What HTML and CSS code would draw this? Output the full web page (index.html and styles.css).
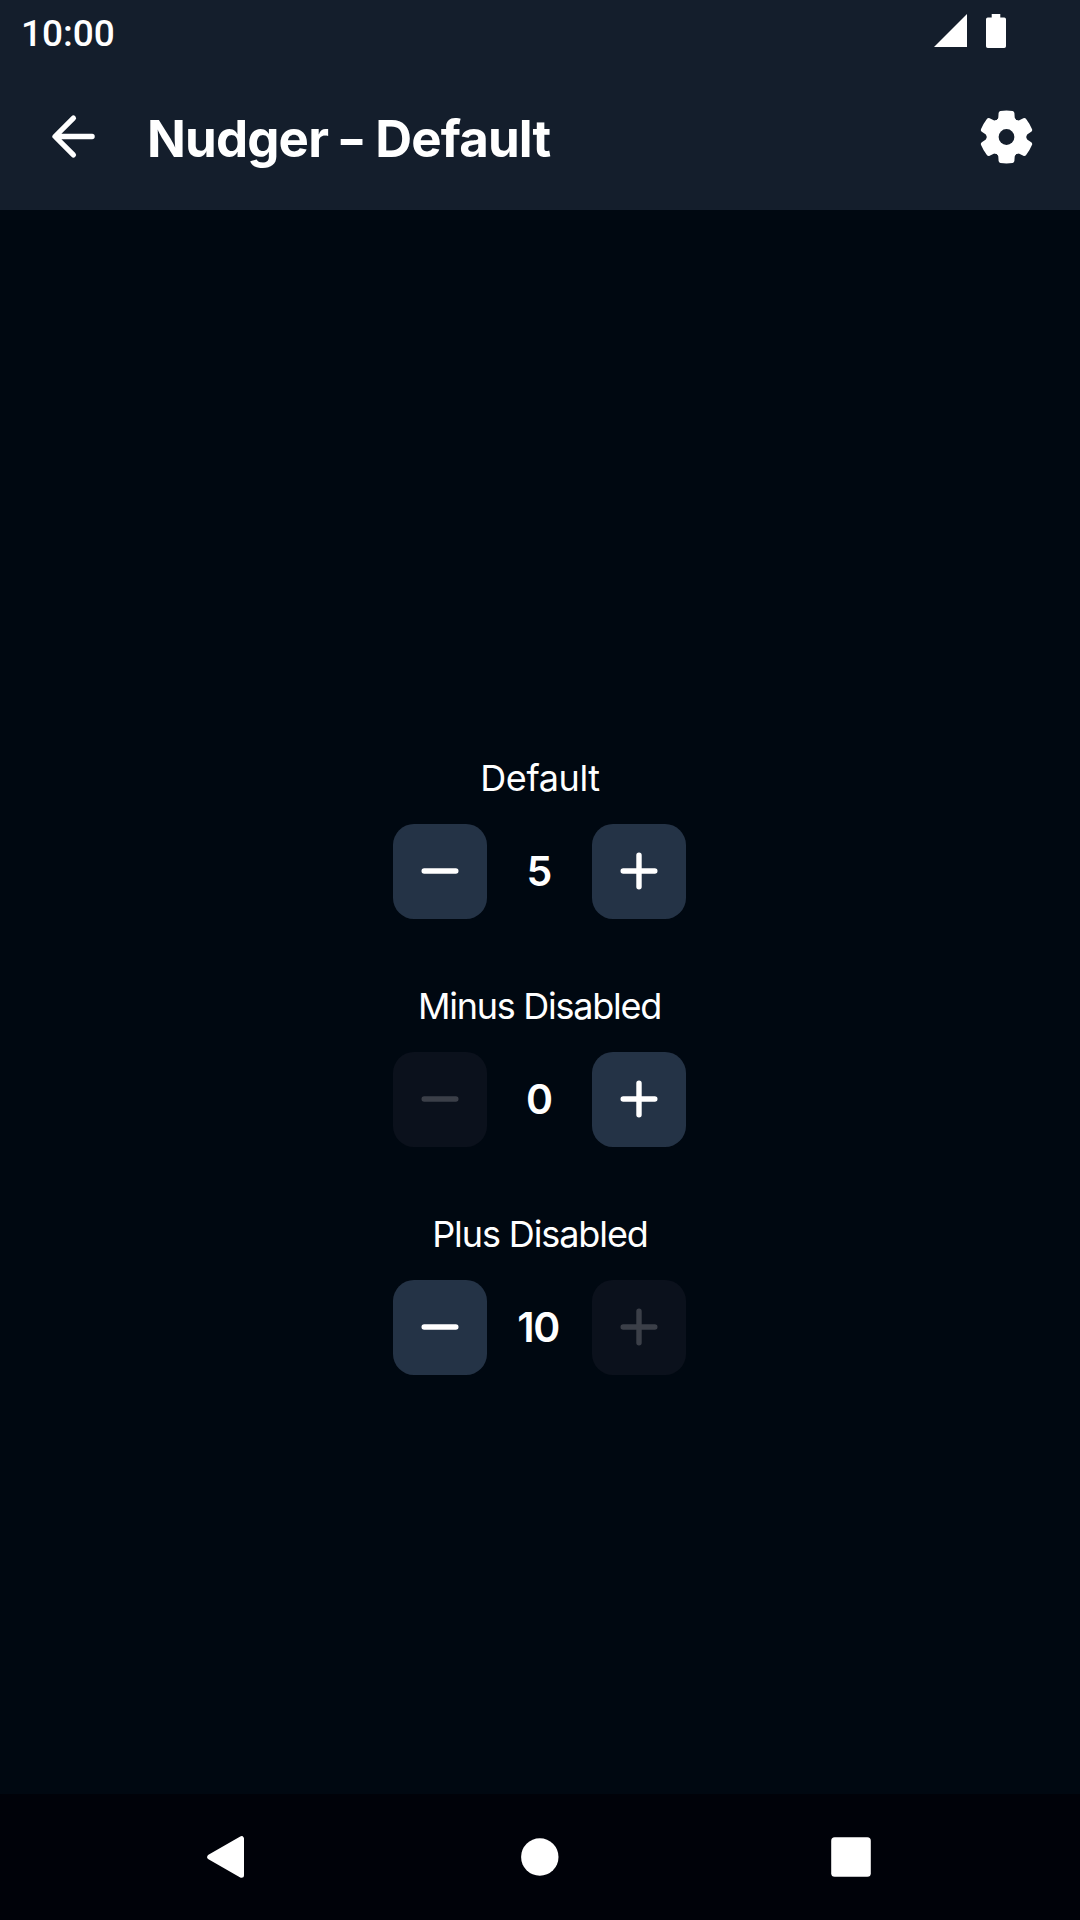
FILE: index.html
```html
<!DOCTYPE html>
<html lang="en">
<head>
<meta charset="utf-8">
<title>Nudger – Default</title>
<link rel="stylesheet" href="styles.css">
</head>
<body>
<div class="screen">
  <header class="header">
    <div class="status-bar">
      <span class="clock">10:00</span>
      <svg class="status-icons" width="76" height="40" viewBox="932 11 76 40">
        <path d="M934 47L967 14V47Z"/>
        <path d="M991.7 14H1000.3V17.5H1004.2Q1006 17.5 1006 19.3V46.2Q1006 48 1004.2 48H987.8Q986 48 986 46.2V19.3Q986 17.5 987.8 17.5H991.7Z"/>
      </svg>
    </div>
    <div class="toolbar">
      <svg class="back" width="63" height="63" viewBox="0 0 63 63"><path d="M50.1 31.5H13.3M31.4 13.1L13 31.5L31.4 49.9"/></svg>
      <h1 class="title">Nudger <span class="dash">–</span> Default</h1>
      <svg class="settings" width="54" height="54" viewBox="-27.5 -27 54 54">
        <defs><path id="tooth" d="M-8.2 -19.5L-7.9 -24Q-7.7 -25.7 -6.1 -26Q0 -26.8 6.1 -26Q7.7 -25.7 7.9 -24L8.2 -19.5Q8.7 -16.7 11.6 -16.5L13.5 -7.8L0 0L-13.5 -7.8L-11.6 -16.5Q-8.7 -16.7 -8.2 -19.5Z"/></defs>
        <mask id="hub" maskUnits="userSpaceOnUse" x="-28" y="-28" width="56" height="56"><rect x="-28" y="-28" width="56" height="56" fill="white"/><circle r="7.9" fill="black"/></mask>
        <g mask="url(#hub)">
          <circle r="19"/>
          <use href="#tooth"/><use href="#tooth" transform="rotate(60)"/><use href="#tooth" transform="rotate(120)"/>
          <use href="#tooth" transform="rotate(180)"/><use href="#tooth" transform="rotate(240)"/><use href="#tooth" transform="rotate(300)"/>
        </g>
      </svg>
    </div>
  </header>
  <main class="content">
    <section class="nudger">
      <h2 class="label label-default">Default</h2>
      <div class="controls">
        <button class="step"><svg width="38" height="39" viewBox="-19 -19 38 39"><path d="M-15.8 0H15.8"/></svg></button>
        <span class="value">5</span>
        <button class="step"><svg width="38" height="39" viewBox="-19 -19 38 39"><path d="M-15.8 0H15.8M0 -15.8V15.8"/></svg></button>
      </div>
    </section>
    <section class="nudger">
      <h2 class="label label-minus">Minus Disabled</h2>
      <div class="controls">
        <button class="step" disabled><svg width="38" height="39" viewBox="-19 -19 38 39"><path d="M-15.8 0H15.8"/></svg></button>
        <span class="value">0</span>
        <button class="step"><svg width="38" height="39" viewBox="-19 -19 38 39"><path d="M-15.8 0H15.8M0 -15.8V15.8"/></svg></button>
      </div>
    </section>
    <section class="nudger">
      <h2 class="label label-plus">Plus Disabled</h2>
      <div class="controls">
        <button class="step"><svg width="38" height="39" viewBox="-19 -19 38 39"><path d="M-15.8 0H15.8"/></svg></button>
        <span class="value value-wide">10</span>
        <button class="step" disabled><svg width="38" height="39" viewBox="-19 -19 38 39"><path d="M-15.8 0H15.8M0 -15.8V15.8"/></svg></button>
      </div>
    </section>
  </main>
  <nav class="nav-bar">
    <svg width="42" height="44" viewBox="0 0 42 44"><path class="nav-back" d="M33.5 3.7V40.3L1.7 22Z"/></svg>
    <svg width="42" height="44" viewBox="0 0 42 44"><circle cx="20.8" cy="22" r="18.7"/></svg>
    <svg width="42" height="44" viewBox="0 0 42 44"><rect x="1.2" y="2.2" width="39.6" height="39.6" rx="3.5"/></svg>
  </nav>
</div>
</body>
</html>
```
FILE: styles.css
```css
* { box-sizing: border-box; margin: 0; padding: 0; }
body { background: #000811; color: #fff; font-family: Inter, sans-serif; }
svg { display: block; fill: #fff; flex: none; overflow: visible; }
.screen { width: 1080px; height: 1920px; display: flex; flex-direction: column; overflow: hidden; }

.header { height: 210px; background: #141e2c; }
.status-bar { height: 63px; padding: 11px 72px 0 21px; display: flex; justify-content: space-between; }
.clock { font: 500 37px/45px Roboto, sans-serif; }
.toolbar { height: 147px; padding: 0 47px 0 42px; display: flex; align-items: center; }
.back { fill: none; stroke: #fff; stroke-width: 5.3; stroke-linecap: round; stroke-linejoin: round; }
.title { flex: 1; margin-left: 42px; padding-top: 5px; font-size: 51px; line-height: 64px; font-weight: 650; letter-spacing: -0.85px; white-space: nowrap; }
.dash { display: inline-block; transform: scaleX(0.85); }

.content { flex: 1; padding-top: 544px; display: flex; flex-direction: column; align-items: center; gap: 63px; }
.nudger { display: flex; flex-direction: column; align-items: center; gap: 22px; }
.label { font-size: 36px; line-height: 48px; font-weight: 400; white-space: nowrap; }
.label-default { letter-spacing: -0.4px; }
.label-minus { padding-right: 1px; letter-spacing: -1.25px; }
.label-plus { letter-spacing: -1.1px; }
.controls { width: 294px; padding-right: 1px; display: flex; justify-content: space-between; align-items: center; }
.step { width: 94px; height: 95px; border: 0; border-radius: 21px; background: #243346; display: flex; align-items: center; justify-content: center; }
.step svg { fill: none; stroke: #fff; stroke-width: 5.4; stroke-linecap: round; }
.step:disabled { background: #0b111c; }
.step:disabled svg { stroke: #3b3f48; }
.value { padding-bottom: 1px; font-size: 41px; line-height: 52px; font-weight: 600; }
.value-wide { padding-right: 3px; letter-spacing: -1.5px; }

.nav-bar { height: 126px; padding: 0 208px; background: #000209; display: flex; justify-content: space-between; align-items: center; }
.nav-back { stroke: #fff; stroke-width: 5; stroke-linejoin: round; }
```
